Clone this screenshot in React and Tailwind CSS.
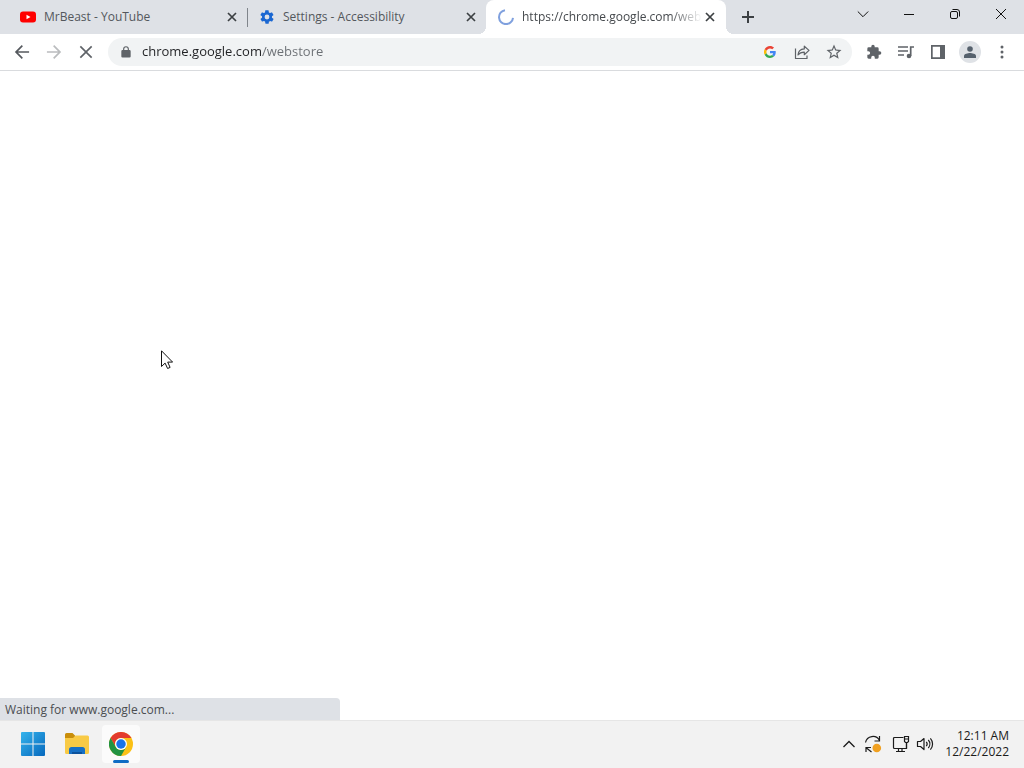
import React from "react";

function Icon({ children, className = "size-4", box = "0 0 24 24" }) {
  return (
    <svg viewBox={box} className={className} fill="currentColor" aria-hidden="true">
      {children}
    </svg>
  );
}

function YouTubeLogo() {
  return (
    <Icon box="0 0 16 16">
      <rect x="0" y="2.5" width="16" height="11" rx="3" fill="#f00" />
      <path d="M6.5 5.7v4.6l4-2.3z" fill="#fff" />
    </Icon>
  );
}

function GearLogo() {
  return (
    <Icon className="size-4 text-[#1a67d2]">
      <path d="M19.4 13c0-.3.1-.6.1-1s0-.7-.1-1l2.1-1.6c.2-.2.3-.5.1-.7l-2-3.4c-.1-.2-.4-.3-.6-.2l-2.5 1c-.5-.4-1.1-.7-1.7-1l-.4-2.600c0-.3-.2-.5-.5-.5h-4c-.2 0-.5.2-.5.4l-.4 2.700c-.6.200-1.100.600-1.700 1l-2.400-1c-.3-.1-.5 0-.6.200l-2 3.400c-.2.300-.1.600.1.700L4.600 11c0 .3-.1.600-.1 1s0 .7.100 1l-2.100 1.600c-.2.200-.3.500-.1.700l2 3.400c.1.200.4.300.6.200l2.400-1c.6.400 1.100.700 1.700 1l.4 2.600c0 .300.300.500.500.500h4c.3 0 .5-.2.500-.4l.4-2.700c.6-.2 1.200-.6 1.700-1l2.500 1c.2.100.5 0 .6-.2l2-3.400c.2-.3.100-.6-.1-.7zM12 15.600a3.600 3.600 0 1 1 0-7.200 3.600 3.600 0 0 1 0 7.200z" />
    </Icon>
  );
}

function Spinner() {
  return (
    <Icon box="0 0 16 16">
      <path d="M7 1.200A7 7 0 1 0 15 8.800" fill="none" stroke="#7fa0de" strokeWidth="2" />
    </Icon>
  );
}

function Tab({ icon, title, active, divider }) {
  return (
    <div
      role="tab"
      aria-selected={!!active}
      className={
        active
          ? "relative flex h-full w-60 items-center rounded-t-lg bg-white pl-3 pr-2"
          : "relative flex h-full w-[239px] items-center pl-3 pr-[7px]"
      }
    >
      {icon}
      <span
        className={
          active
            ? "ml-2 min-w-0 flex-1 overflow-hidden whitespace-nowrap text-[#45494d] [mask-image:linear-gradient(to_right,#000_82%,transparent)]"
            : "ml-2 min-w-0 flex-1 overflow-hidden whitespace-nowrap text-[#53575c]"
        }
      >
        {title}
      </span>
      <button type="button" aria-label={`Close ${title}`} className="flex size-4 items-center justify-center text-[#3c4043]">
        <Icon box="0 0 16 16">
          <path d="M4 4l8 8M12 4l-8 8" stroke="currentColor" strokeWidth="1.700" />
        </Icon>
      </button>
      {divider && <span className="absolute -right-px top-2 h-[19px] w-px bg-[#80858b]" />}
      {active && (
        <>
          <span className="absolute -left-2 bottom-0 size-2 bg-[radial-gradient(circle_at_0_0,transparent_8px,#fff_8px)]" />
          <span className="absolute -right-2 bottom-0 size-2 bg-[radial-gradient(circle_at_100%_0,transparent_8px,#fff_8px)]" />
        </>
      )}
    </div>
  );
}

function WindowButton({ label, children }) {
  return (
    <button type="button" aria-label={label} className="flex h-7 w-[46px] items-center justify-center text-[#111]">
      <svg viewBox="0 0 12 12" className="size-3" fill="none" stroke="currentColor" aria-hidden="true">
        {children}
      </svg>
    </button>
  );
}

function ToolButton({ label, children, className = "text-[#5f6368]" }) {
  return (
    <button type="button" aria-label={label} className={`flex h-7 w-8 shrink-0 items-center justify-center ${className}`}>
      {children}
    </button>
  );
}

function TabStrip() {
  return (
    <div className="flex h-[34px] bg-[#dee1e6] pl-2 text-xs">
      <div role="tablist" className="flex">
        <Tab icon={<YouTubeLogo />} title="MrBeast - YouTube" divider />
        <Tab icon={<GearLogo />} title="Settings - Accessibility" />
        <Tab icon={<Spinner />} title="https://chrome.google.com/web" active />
      </div>
      <button type="button" aria-label="New tab" className="ml-2 flex h-full w-7 items-center justify-center text-[#3c4043]">
        <Icon box="0 0 16 16">
          <path d="M8 2v12M2 8h12" stroke="currentColor" strokeWidth="2" />
        </Icon>
      </button>
      <div className="ml-auto flex">
        <WindowButton label="Search tabs">
          <path d="M.8 3.500L6 8.700l5.200-5.200" />
        </WindowButton>
        <WindowButton label="Minimize">
          <path d="M1 6.500h10" />
        </WindowButton>
        <WindowButton label="Restore">
          <rect x="1.500" y="3.500" width="7" height="7" rx="1.500" />
          <path d="M3.500 1.500h4.500a2.500 2.500 0 0 1 2.500 2.500v4.500" />
        </WindowButton>
        <WindowButton label="Close window">
          <path d="M1 1l10 10M11 1L1 11" />
        </WindowButton>
      </div>
    </div>
  );
}

function Toolbar() {
  return (
    <div className="flex h-[37px] items-center border-b border-[#d9dbde] bg-white px-1.5">
      <ToolButton label="Back" className="text-[#55595e]">
        <Icon className="size-5">
          <path d="M20.500 11H7.200l5.900-5.900-1.400-1.400L3.400 12l8.300 8.300 1.400-1.400L7.200 13h13.300z" />
        </Icon>
      </ToolButton>
      <ToolButton label="Forward" className="text-[#babcbe]">
        <Icon className="size-5">
          <path d="M3.500 11h13.300l-5.900-5.900 1.400-1.400 8.300 8.300-8.300 8.300-1.400-1.400 5.900-5.900H3.500z" />
        </Icon>
      </ToolButton>
      <ToolButton label="Stop loading">
        <Icon className="size-5">
          <path d="M19.500 5.900L18.100 4.500 12 10.600 5.900 4.500 4.500 5.900l6.100 6.100-6.100 6.100 1.400 1.400 6.100-6.100 6.100 6.100 1.400-1.400-6.100-6.100z" />
        </Icon>
      </ToolButton>
      <div className="mx-1.5 flex h-7 min-w-0 flex-1 items-center rounded-full bg-[#f1f3f4] pr-0.5">
        <Icon className="ml-[11px] mr-2 size-3.5 shrink-0 text-[#5f6368]">
          <path d="M18 8.500h-1V7A5 5 0 0 0 7 7v1.500H6a2 2 0 0 0-2 2v9a2 2 0 0 0 2 2h12a2 2 0 0 0 2-2v-9a2 2 0 0 0-2-2zM9 7a3 3 0 0 1 6 0v1.500H9z" />
        </Icon>
        <input
          type="text"
          aria-label="Address"
          defaultValue="chrome.google.com/webstore"
          className="ml-px min-w-0 flex-1 bg-[linear-gradient(to_right,#202124_120px,#6a6e73_120px)] bg-clip-text text-[13px] text-transparent outline-none"
        />
        <ToolButton label="Search with Google">
          <svg viewBox="0 0 48 48" className="size-3" aria-hidden="true">
            <path fill="#ea4335" d="M24 9.500c3.500 0 6.700 1.200 9.200 3.600l6.900-6.900C35.900 2.400 30.500 0 24 0 14.600 0 6.500 5.400 2.600 13.200l8 6.200C12.400 13.700 17.700 9.500 24 9.500z" />
            <path fill="#4285f4" d="M47 24.600c0-1.600-.2-3.100-.4-4.600H24v9h12.900c-.6 3-2.200 5.500-4.700 7.200l7.700 6C44.400 38 47 31.800 47 24.600z" />
            <path fill="#fbbc05" d="M10.500 28.600a14.500 14.500 0 0 1 0-9.200l-8-6.200a24 24 0 0 0 0 21.600z" />
            <path fill="#34a853" d="M24 48c6.500 0 11.900-2.100 15.900-5.800l-7.700-6c-2.200 1.500-4.900 2.300-8.200 2.300-6.300 0-11.600-4.200-13.500-9.900l-8 6.200C6.500 42.600 14.600 48 24 48z" />
          </svg>
        </ToolButton>
        <ToolButton label="Share this page">
          <svg viewBox="0 0 16 16" className="size-4" fill="none" stroke="currentColor" strokeWidth="1.200" strokeLinejoin="round" aria-hidden="true">
            <path d="M1.500 4.500v10h11.500v-3" />
            <path d="M10.300 2.200v2.700C6.300 5.200 4.200 7.700 4 11c1.500-2.100 3.500-2.900 6.300-2.900v2.600L15 6.400z" />
          </svg>
        </ToolButton>
        <ToolButton label="Bookmark this tab">
          <Icon className="size-[18px]">
            <path d="M22 9.200l-7.200-.6L12 2 9.200 8.600 2 9.200l5.500 4.700L5.800 21l6.200-3.700 6.200 3.700-1.600-7.100zM12 15.400l-3.800 2.300 1-4.300-3.300-2.900 4.400-.4L12 6.100l1.700 4 4.400.4-3.300 2.900 1 4.300z" />
          </Icon>
        </ToolButton>
      </div>
      <ToolButton label="Extensions">
        <Icon className="size-4">
          <path d="M20.500 11H19V7a2 2 0 0 0-2-2h-4V3.500a2.500 2.500 0 0 0-5 0V5H4a2 2 0 0 0-2 2v3.800h1.500a2.700 2.700 0 0 1 0 5.400H2V20c0 1.100.9 2 2 2h3.800v-1.500a2.700 2.700 0 0 1 5.400 0V22H17a2 2 0 0 0 2-2v-4h1.500a2.500 2.500 0 0 0 0-5z" />
        </Icon>
      </ToolButton>
      <ToolButton label="Media controls">
        <svg viewBox="0 0 18 16" className="h-4 w-[18px]" fill="none" stroke="currentColor" strokeWidth="1.700" aria-hidden="true">
          <path d="M1 3h10M1 7h10M1 11h6M13.700 12V3H17" />
          <circle cx="12" cy="12" r="2.300" fill="currentColor" stroke="none" />
        </svg>
      </ToolButton>
      <ToolButton label="Side panel">
        <svg viewBox="0 0 14 14" className="size-3.5" fill="currentColor" aria-hidden="true">
          <path d="M0 0h14v14H0zM1.700 1.700v10.600H9V1.700z" fillRule="evenodd" />
        </svg>
      </ToolButton>
      <ToolButton label="Profile" className="text-[#56616d]">
        <span className="flex size-[22px] items-center justify-center rounded-full bg-[#dfe2e6]">
          <svg viewBox="0 0 12 12" className="size-3" fill="currentColor" aria-hidden="true">
            <circle cx="6" cy="3" r="2.800" />
            <path d="M0 12v-2c0-2 4-2.900 6-2.900s6 .9 6 2.900v2z" />
          </svg>
        </span>
      </ToolButton>
      <ToolButton label="Menu">
        <svg viewBox="0 0 4 14" className="h-3.5 w-1" fill="currentColor" aria-hidden="true">
          <circle cx="2" cy="2" r="1.500" />
          <circle cx="2" cy="7" r="1.500" />
          <circle cx="2" cy="12" r="1.500" />
        </svg>
      </ToolButton>
    </div>
  );
}

function ChromeLogo() {
  return (
    <svg viewBox="0 0 48 48" className="size-6" aria-hidden="true">
      <circle cx="24" cy="24" r="24" fill="#fbc116" />
      <path d="M3.200 12A24 24 0 0 1 44.800 12H24a12 12 0 0 0-10.400 18z" fill="#e33b2e" />
      <path d="M3.200 12A24 24 0 0 0 24 48l10.400-18a12 12 0 0 1-20.800 0z" fill="#229342" />
      <circle cx="24" cy="24" r="12" fill="#fff" />
      <circle cx="24" cy="24" r="9.500" fill="#1a73e8" />
    </svg>
  );
}

function TaskButton({ label, active, children }) {
  return (
    <button
      type="button"
      aria-label={label}
      className={
        active
          ? "relative flex size-[38px] items-center justify-center rounded bg-[#fbfbfb]"
          : "relative flex size-[38px] items-center justify-center rounded"
      }
    >
      {children}
      {active && <span className="absolute inset-x-[11px] bottom-0 h-[3px] rounded-full bg-[#0f6cc4]" />}
    </button>
  );
}

function Taskbar() {
  return (
    <footer className="flex h-12 items-center justify-between border-t border-[#e6e6e6] bg-[#f2f2f2] pb-px pl-[14px] pr-[15px] text-xs text-[#1b1b1b]">
      <div className="flex gap-1.5">
        <TaskButton label="Start">
          <svg viewBox="0 0 24 24" className="size-6" aria-hidden="true">
            <defs>
              <linearGradient id="start" gradientUnits="userSpaceOnUse" x1="0" y1="0" x2="24" y2="24">
                <stop offset="0" stopColor="#35b4ec" />
                <stop offset="1" stopColor="#0668bd" />
              </linearGradient>
            </defs>
            <path fill="url(#start)" d="M0 1a1 1 0 0 1 1-1h10.500v11.500H0zM12.500 0H23a1 1 0 0 1 1 1v10.500H12.500zM0 12.500h11.500V24H1a1 1 0 0 1-1-1zM12.500 12.500H24V23a1 1 0 0 1-1 1H12.500z" />
          </svg>
        </TaskButton>
        <TaskButton label="File Explorer">
          <svg viewBox="0 0 24 22" className="h-[22px] w-6" aria-hidden="true">
            <path d="M0 1.500A1.500 1.500 0 0 1 1.500 0h6L10 2.500V7H0z" fill="#c98e0b" />
            <path d="M0 5h8l2.500-2.500h12A1.500 1.500 0 0 1 24 4v15.500a1.500 1.500 0 0 1-1.500 1.500h-21A1.500 1.500 0 0 1 0 19.500z" fill="#f8ca45" />
            <path d="M4 21v-4.500A2.500 2.500 0 0 1 6.500 14h11a2.500 2.500 0 0 1 2.500 2.500V21z" fill="#1670c5" />
            <path d="M7 21v-2h10v2z" fill="#0c529c" />
          </svg>
        </TaskButton>
        <TaskButton label="Google Chrome" active>
          <ChromeLogo />
        </TaskButton>
      </div>
      <div className="flex items-center">
        <button type="button" aria-label="Show hidden icons" className="flex h-10 w-6 items-center justify-center">
          <svg viewBox="0 0 12 12" className="size-3" fill="none" stroke="currentColor" strokeWidth="1.300" aria-hidden="true">
            <path d="M.5 9L6 3.500 11.500 9" />
          </svg>
        </button>
        <button type="button" aria-label="Windows Update" className="flex h-10 w-6 items-center justify-center">
          <svg viewBox="0 0 18 18" className="size-[18px]" fill="none" stroke="currentColor" strokeWidth="1.200" aria-hidden="true">
            <path d="M1.500 7.500A7.500 7.500 0 0 1 15.500 5.500M15.500 1v5h-5M7 12.500H2V17M2.500 13L7.500 17" />
            <circle cx="12.800" cy="13" r="4.300" fill="#f0a020" stroke="none" />
          </svg>
        </button>
        <button type="button" aria-label="Network and volume" className="ml-1 flex h-10 w-12 items-center justify-center gap-1.5">
          <svg viewBox="0 0 18 18" className="size-[18px]" fill="none" stroke="currentColor" strokeWidth="1.200" aria-hidden="true">
            <path d="M11.500 2.500H2.500a1 1 0 0 0-1 1v9a1 1 0 0 0 1 1h12V8M6.500 13.500v3M10 13.500v3M4 16.500h9" />
            <path d="M12.500 1.500h4v5l-1 1h-2l-1-1zM12.500 4h4M14.500 7.500v6" />
          </svg>
          <svg viewBox="0 0 18 18" className="size-[18px]" fill="none" stroke="currentColor" strokeWidth="1.200" strokeLinejoin="round" aria-hidden="true">
            <path d="M1.500 6.500v5h3l3.500 3v-11l-3.500 3zM10.300 6.800a3.500 3.500 0 0 1 0 4.400M12.300 5a6 6 0 0 1 0 8M14.400 3.300a8.600 8.600 0 0 1 0 11.400" />
          </svg>
        </button>
        <button type="button" className="ml-2 text-right leading-4">
          <span className="block">12:11 AM</span>
          <span className="block">12/22/2022</span>
        </button>
      </div>
    </footer>
  );
}

export default function App() {
  return (
    <div className="relative flex min-h-screen flex-col bg-white font-['Open_Sans','Noto_Sans',sans-serif]">
      <TabStrip />
      <Toolbar />
      <main className="flex flex-1 flex-col justify-end bg-white">
        <div role="status" className="flex h-[22px] w-[340px] items-center rounded-tr bg-[#dee1e6] pl-[5px] pt-0.5 text-xs text-[#4a4d51]">
          Waiting for www.google.com...
        </div>
      </main>
      <Taskbar />
      <svg viewBox="0 0 12 19" className="absolute left-[161px] top-[350px] h-[19px] w-3" aria-hidden="true">
        <path d="M.5 .8v15.700l3.600-3.400 2.500 5.400 2.500-1.100-2.400-5.300h4.900z" fill="#fff" stroke="#111" />
      </svg>
    </div>
  );
}
